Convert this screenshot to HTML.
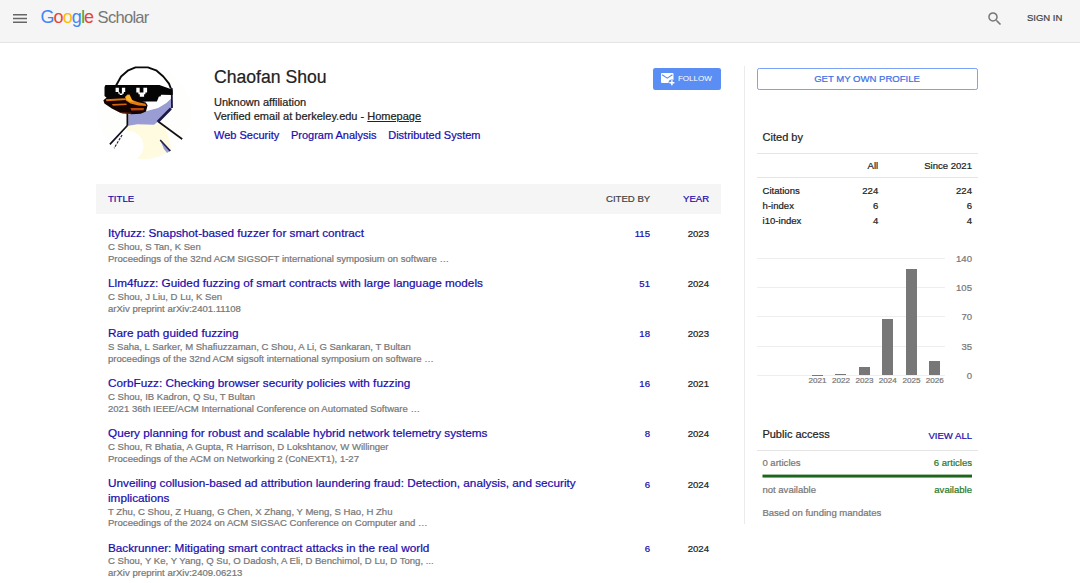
<!DOCTYPE html>
<html><head><meta charset="utf-8"><title>Chaofan Shou - Google Scholar</title>
<style>
*{box-sizing:border-box;margin:0;padding:0}
body{-webkit-text-stroke:0.22px currentColor}
html,body{width:1080px;height:583px;overflow:hidden;background:#fff;font-family:"Liberation Sans",Arial,sans-serif;color:#222}
a{text-decoration:none;color:#1a0dab}
#hdr{position:absolute;left:0;top:0;width:1080px;height:43px;background:#f5f5f5;border-bottom:1px solid #e5e5e5}
#menu{position:absolute;left:13px;top:14px}
#menu i{position:absolute;left:0;width:14px;height:1.5px;background:#666}
#logo{-webkit-text-stroke:0;position:absolute;left:40.500px;top:6px;line-height:22px;color:#777;white-space:nowrap}
#logo .gg{font-size:18px;letter-spacing:-0.9px}
#logo .sc{font-size:16.6px;letter-spacing:-0.75px;margin-left:4.400px}
#signin{position:absolute;left:1027px;top:12.400px;font-size:9.5px;line-height:12px;color:#444}
#srch{position:absolute;left:985.500px;top:10.100px}
#avatar{position:absolute;left:96.6px;top:65px;width:94.3px;height:94.3px;border-radius:50%;overflow:hidden}
#name{position:absolute;left:214px;top:66.200px;font-size:17.6px;line-height:22px;color:#222}
.il{position:absolute;left:214px;font-size:11px;line-height:14px;color:#222;white-space:nowrap}
#follow{-webkit-text-stroke:0;position:absolute;left:653.3px;top:67.9px;width:67.5px;height:21.9px;background:#5b8ef4;border-radius:2.2px;color:#fff;font-size:8.05px;line-height:21.9px}
#follow span{position:absolute;left:24.6px;top:0.1px}
#own{position:absolute;left:757px;top:68px;width:221px;height:21.7px;border:1px solid #7ba2f6;border-radius:2.2px;color:#3b70e6;font-size:9.55px;line-height:19.6px;text-align:center;text-indent:-1px}
#vline{position:absolute;left:744px;top:66px;width:1px;height:458px;background:#ebebeb}
#thead{position:absolute;left:96px;top:183.500px;width:625px;height:30.3px;background:#f5f5f5;font-size:9.6px;line-height:30px}
#thead span{position:absolute;top:0}
.row{position:absolute;left:108px;width:613px}
.row .t{font-size:11.75px;line-height:14.5px;padding-bottom:0.4px;color:#1a0dab;display:block;width:480px}
.row .g{font-size:9.55px;line-height:11.9px;color:#777;white-space:nowrap;display:block}
.row .c{position:absolute;top:2.400px;right:71px;font-size:9.6px;line-height:12px;color:#1a0dab;text-align:right}
.row .y{position:absolute;top:2.400px;right:12px;font-size:9.6px;line-height:12px;color:#222;text-align:right}
.sb{position:absolute;font-size:9.55px;line-height:12px;color:#222;white-space:nowrap}
.hl{position:absolute;height:1px;background:#e5e5e5}
.bar{position:absolute;width:11px;background:#777}
.yl{position:absolute;width:25px;text-align:center;font-size:8.1px;line-height:10px;color:#777}
.ax{color:#777}
.gl{background:#eee}
</style></head><body>
<div id="hdr">
 <svg id="menu" width="14" height="10" viewBox="0 0 14 10"><path fill="#666" d="M0 0h14v1.500h-14zM0 3.750h14v1.500h-14zM0 7.500h14v1.500h-14z"/></svg>
 <div id="logo"><span class="gg"><span style="color:#4285f4">G</span><span style="color:#ea4335">o</span><span style="color:#fbbc05">o</span><span style="color:#4285f4">g</span><span style="color:#34a853">l</span><span style="color:#ea4335">e</span></span><span class="sc">Scholar</span></div>
 <svg id="srch" width="17.63" height="17.63" viewBox="0 0 24 24"><path fill="#777" d="M15.5 14h-.79l-.28-.27A6.471 6.471 0 0 0 16 9.5 6.5 6.5 0 1 0 9.5 16c1.61 0 3.09-.59 4.23-1.57l.27.28v.79l5 4.99L20.490 19l-4.990-5zm-6 0C7.010 14 5 11.990 5 9.500S7.010 5 9.500 5 14 7.010 14 9.500 11.990 14 9.500 14z"/></svg>
 <div id="signin">SIGN IN</div>
</div>
<div id="avatar"><svg width="94.3" height="94.3" viewBox="96.600 65 94.300 94.300">
<rect x="96" y="64" width="96" height="96" fill="#fefefd"/>
<!-- body -->
<path d="M127.500 125 L158 122.500 L166 130 L174 160 L104 160 L112 144 Z" fill="#fffbe0"/>
<ellipse cx="128" cy="146" rx="15" ry="15" fill="#fff"/>
<path d="M104 160 L110 146 L126 127 L127 140 L116 160 Z" fill="#fff"/>
<!-- lower right shadow -->
<path d="M160 140.500 L170.500 151 L167.500 154 L163.500 149 Z" fill="#9a9cd4"/>
<path d="M159.800 140 L170.200 151.400" stroke="#23234a" stroke-width="1.600"/>
<!-- head fill -->
<path d="M115.600 86 L120.700 76.500 L127.900 70.300 L135.100 67.300 L147.500 67.300 L155.700 70.300 L162.900 76.500 L168.600 83.700 L171 90 L171.500 108 L157 122 L127.500 125 L127 100 Z" fill="#fff"/>
<!-- lavender neck -->
<path d="M127.900 114.500 L145.400 111.300 L157.800 108 L166 103 L171.300 98 L171.600 108.200 L157.700 121.500 L153.600 124.700 L137.200 124.200 L127.900 125.700 Z" fill="#9a9cd4"/>
<!-- outlines -->
<path d="M115.400 86 L120.700 76.500 L127.900 70.300 L135.100 67.400 L147.500 67.400 L155.700 70.300 L162.900 76.500 L168.600 83.700 L170.500 88.500" fill="none" stroke="#0a0a0a" stroke-width="1.900" stroke-linejoin="round"/>
<path d="M171.300 88 L171.600 108" stroke="#16163a" stroke-width="1.800"/>
<path d="M170.500 108.500 L157.200 122" stroke="#1a1a44" stroke-width="2.600"/>
<path d="M158.500 122 L182 139.200" stroke="#111" stroke-width="1.700"/>
<path d="M127 112 L127 125.700" stroke="#0a0a0a" stroke-width="1.800"/>
<path d="M127 125.500 L109 144.800" stroke="#0e0e20" stroke-width="1.700"/>
<path d="M121.700 135 L113.500 148.500" stroke="#1a1a30" stroke-width="1.100" stroke-dasharray="2.500 1.200"/>
<!-- glasses -->
<path d="M104.100 85.100 L159 85.100 L172.300 89.800 L172.300 95 L160.800 94.800 L160 96.500 L158.500 96.500 L156.500 101.500 L147 101.500 L140 102 L133 100 L125 98 L106.500 98 L104.100 96 Z" fill="#050505"/>
<path fill="#fff" d="M115.200 87.700h3.300v4.500h0.900v1.200h2.100v-1.200h0v-4.500h3.300v4.400h-1.400v1.600h-1.400v1.400h-2.700v-1.400h-1.400v-1.600h-2.700z"/>
<path fill="#fff" d="M135.900 87.700h3.400v4.800h3.700v-4.800h3.700v4.900h-1.700v1.700h-1.300v2.400h-4.300v-2.400h-1.400v-1.700h-2.100z"/>
<!-- beak -->
<path d="M103 100.200 L106.300 97.400 L123.800 96.900 L125.900 93.800 L129.200 93.300 L132.200 98.900 L145.400 102.500 L147.200 105.300 L145.600 111.500 L140.300 113.800 L131 114.300 L119.700 112.700 L111.400 108.600 L104 103.500 Z" fill="#120300"/>
<path d="M105.500 99.200 L124.500 98.300 L126 100 L106 101.200 Z" fill="#e07410"/>
<path d="M124.500 97 L127 94.600 L129.200 94.600 L131.800 99.900 L138 102.200 L145 103.700 L146 106 L138 105.600 L130 103.400 L125.500 100.600 Z" fill="#e67c10"/>
<path d="M125.300 97 L127.300 95 L129 95 L131.500 100.200 L134 101.800 L129 101.500 L126 99.800 Z" fill="#fbb528"/>
<path d="M111.500 103.900 L126 103.400 L126.300 105.100 L112.500 105.700 Z" fill="#d4640c"/>
<path d="M130 108 L143.500 107.900 L143.200 110.300 L131 110.500 Z" fill="#b84608"/>
<path d="M120.700 112.300 L131 112.800 L131 113.800 L121.500 113.500 Z" fill="#7c2604"/>
</svg></div>
<div id="name">Chaofan Shou</div>
<div class="il" style="top:94.600px">Unknown affiliation</div>
<div class="il" style="top:109.300px">Verified email at berkeley.edu - <span style="text-decoration:underline">Homepage</span></div>
<div class="il" style="top:128px"><a>Web Security</a><a style="margin-left:11.700px">Program Analysis</a><a style="margin-left:11.700px">Distributed System</a></div>
<div id="follow"><svg style="position:absolute;left:7.500px;top:5.300px" width="16" height="14" viewBox="0 0 16 14"><rect x="0" y="0" width="12.5" height="10.1" rx="1" fill="#fff"/><path d="M1.100 1.700L6.250 5.200L11.400 1.700" stroke="#5b8ef4" stroke-width="1.100" fill="none"/><circle cx="10.900" cy="9.700" r="3.300" fill="#5b8ef4"/><path d="M8.900 9.700h4M10.900 7.700v4" stroke="#fff" stroke-width="1.500" stroke-linecap="round"/></svg><span>FOLLOW</span></div>
<div id="own">GET MY OWN PROFILE</div>
<div id="vline"></div>

<div id="thead"><span style="left:12px;color:#1a0dab">TITLE</span><span style="left:510px;color:#444">CITED BY</span><span style="left:587px;color:#1a0dab">YEAR</span></div>

<div class="row" style="top:225.90px"><a class="t">Ityfuzz: Snapshot-based fuzzer for smart contract</a><span class="g">C Shou, S Tan, K Sen</span><span class="g">Proceedings of the 32nd ACM SIGSOFT international symposium on software …</span><span class="c">115</span><span class="y">2023</span></div>
<div class="row" style="top:275.95px"><a class="t">Llm4fuzz: Guided fuzzing of smart contracts with large language models</a><span class="g">C Shou, J Liu, D Lu, K Sen</span><span class="g">arXiv preprint arXiv:2401.11108</span><span class="c">51</span><span class="y">2024</span></div>
<div class="row" style="top:326.00px"><a class="t">Rare path guided fuzzing</a><span class="g">S Saha, L Sarker, M Shafiuzzaman, C Shou, A Li, G Sankaran, T Bultan</span><span class="g">proceedings of the 32nd ACM sigsoft international symposium on software …</span><span class="c">18</span><span class="y">2023</span></div>
<div class="row" style="top:376.05px"><a class="t">CorbFuzz: Checking browser security policies with fuzzing</a><span class="g">C Shou, IB Kadron, Q Su, T Bultan</span><span class="g">2021 36th IEEE/ACM International Conference on Automated Software …</span><span class="c">16</span><span class="y">2021</span></div>
<div class="row" style="top:426.10px"><a class="t">Query planning for robust and scalable hybrid network telemetry systems</a><span class="g">C Shou, R Bhatia, A Gupta, R Harrison, D Lokshtanov, W Willinger</span><span class="g">Proceedings of the ACM on Networking 2 (CoNEXT1), 1-27</span><span class="c">8</span><span class="y">2024</span></div>
<div class="row" style="top:476.15px"><a class="t">Unveiling collusion-based ad attribution laundering fraud: Detection, analysis, and security implications</a><span class="g">T Zhu, C Shou, Z Huang, G Chen, X Zhang, Y Meng, S Hao, H Zhu</span><span class="g">Proceedings of the 2024 on ACM SIGSAC Conference on Computer and …</span><span class="c">6</span><span class="y">2024</span></div>
<div class="row" style="top:540.60px"><a class="t">Backrunner: Mitigating smart contract attacks in the real world</a><span class="g">C Shou, Y Ke, Y Yang, Q Su, O Dadosh, A Eli, D Benchimol, D Lu, D Tong, ...</span><span class="g">arXiv preprint arXiv:2409.06213</span><span class="c">6</span><span class="y">2024</span></div>


<div class="sb" style="left:762.600px;top:130px;font-size:11.02px;line-height:14px">Cited by</div>
<div class="hl" style="left:757px;top:153px;width:221px"></div>
<div class="sb" style="right:201.800px;top:160px">All</div>
<div class="sb" style="right:108px;top:160px">Since 2021</div>
<div class="hl" style="left:757px;top:177px;width:221px"></div>
<div class="sb" style="left:762.600px;top:185.4px">Citations</div><div class="sb" style="right:201.800px;top:185.4px">224</div><div class="sb" style="right:108px;top:185.4px">224</div>
<div class="sb" style="left:762.600px;top:200.4px">h-index</div><div class="sb" style="right:201.800px;top:200.4px">6</div><div class="sb" style="right:108px;top:200.4px">6</div>
<div class="sb" style="left:762.600px;top:215.3px">i10-index</div><div class="sb" style="right:201.800px;top:215.3px">4</div><div class="sb" style="right:108px;top:215.3px">4</div>
<div id="chart">
<div class="hl gl" style="left:757px;top:257.5px;width:188px"></div><div class="sb ax" style="right:108px;top:252.5px">140</div>
<div class="hl gl" style="left:757px;top:286.8px;width:188px"></div><div class="sb ax" style="right:108px;top:281.8px">105</div>
<div class="hl gl" style="left:757px;top:316.1px;width:188px"></div><div class="sb ax" style="right:108px;top:311.1px">70</div>
<div class="hl gl" style="left:757px;top:345.5px;width:188px"></div><div class="sb ax" style="right:108px;top:340.5px">35</div>
<div class="hl gl" style="left:757px;top:374.8px;width:188px"></div><div class="sb ax" style="right:108px;top:369.8px">0</div>
<div class="bar" style="left:812px;top:374.6px;height:0.8px"></div><div class="yl" style="left:805px;top:376px">2021</div>
<div class="bar" style="left:835.4px;top:374px;height:1.4px"></div><div class="yl" style="left:828.4px;top:376px">2022</div>
<div class="bar" style="left:859px;top:367.1px;height:8.3px"></div><div class="yl" style="left:852px;top:376px">2023</div>
<div class="bar" style="left:882.3px;top:319.4px;height:56.0px"></div><div class="yl" style="left:875.3px;top:376px">2024</div>
<div class="bar" style="left:906px;top:269.4px;height:106.0px"></div><div class="yl" style="left:899px;top:376px">2025</div>
<div class="bar" style="left:929.3px;top:361.1px;height:14.3px"></div><div class="yl" style="left:922.3px;top:376px">2026</div>
</div>
<div class="sb" style="left:762.400px;top:427.200px;font-size:11.02px;line-height:14px">Public access</div>
<div class="sb" style="right:108px;top:430px;color:#1a0dab">VIEW ALL</div>
<div class="hl" style="left:757px;top:450px;width:221px"></div>
<div class="sb" style="left:762.400px;top:456.800px;color:#777">0 articles</div>
<div class="sb" style="right:108px;top:456.800px;color:#2b7a2b">6 articles</div>
<svg style="position:absolute;left:760px;top:472px" width="215" height="8"><rect x="2.500" y="2.600" width="209.500" height="2.950" fill="#1c661c"/></svg>
<div class="sb" style="left:762.400px;top:483.700px;color:#777">not available</div>
<div class="sb" style="right:108px;top:483.700px;color:#2b7a2b">available</div>
<div class="sb" style="left:762.400px;top:506.600px;color:#777">Based on funding mandates</div>

</body></html>
